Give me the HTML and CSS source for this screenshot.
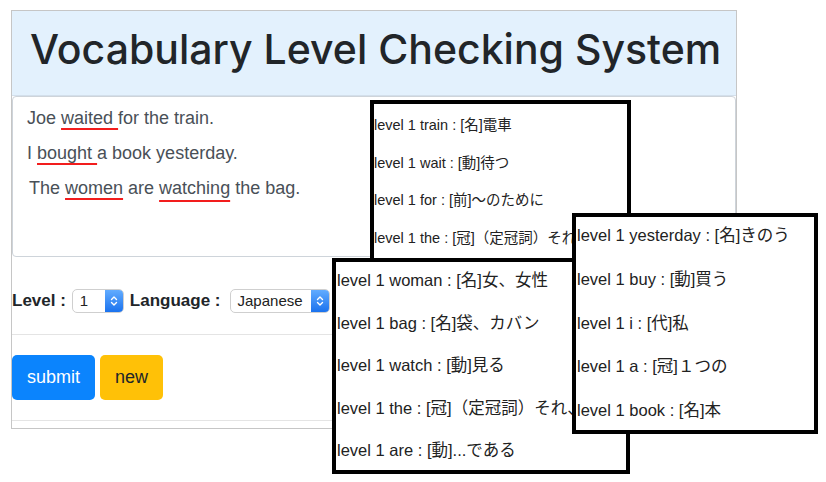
FILE: index.html
```html
<!DOCTYPE html>
<html lang="en">
<head>
<meta charset="utf-8">
<title>Vocabulary Level Checking System</title>
<link rel="stylesheet" href="styles.css">
</head>
<body>
<div class="frame">
  <header class="masthead"><h1>Vocabulary Level Checking System</h1></header>
  <div class="textbox">
    <p>Joe <span class="mark">waited </span>for the train.</p>
    <p>I <span class="mark">bought </span>a book yesterday.</p>
    <p class="l3">The <span class="mark">women</span> are <span class="mark deep">watching</span> the bag.</p>
  </div>
  <div class="options">
    <span class="lbl">Level :</span>
    <div class="sel sel-level"><span class="val">1</span><span class="arrows"><svg width="8" height="14" viewBox="0 0 8 14"><polyline points="1.5,5.5 4,3 6.5,5.5"/><polyline points="1.5,8.5 4,11 6.5,8.5"/></svg></span></div>
    <span class="lbl lbl-lang">Language :</span>
    <div class="sel sel-lang"><span class="val">Japanese</span><span class="arrows"><svg width="8" height="14" viewBox="0 0 8 14"><polyline points="1.5,5.5 4,3 6.5,5.5"/><polyline points="1.5,8.5 4,11 6.5,8.5"/></svg></span></div>
  </div>
  <hr class="rule">
  <div class="actions">
    <button class="btn btn-submit">submit</button>
    <button class="btn btn-new">new</button>
  </div>
  <hr class="rule">
</div>

<div class="popup p1">
  <p>level 1 train : [名]電車</p>
  <p>level 1 wait : [動]待つ</p>
  <p>level 1 for : [前]〜のために</p>
  <p class="cut">level 1 the : [冠]（定冠詞）それ</p>
</div>

<div class="popup p2">
  <p>level 1 woman : [名]女、女性</p>
  <p>level 1 bag : [名]袋、カバン</p>
  <p>level 1 watch : [動]見る</p>
  <p class="cut">level 1 the : [冠]（定冠詞）それ、</p>
  <p>level 1 are : [動]...である</p>
</div>

<div class="popup p3">
  <p>level 1 yesterday : [名]きのう</p>
  <p>level 1 buy : [動]買う</p>
  <p>level 1 i : [代]私</p>
  <p>level 1 a : [冠]１つの</p>
  <p>level 1 book : [名]本</p>
</div>
</body>
</html>
```

FILE: styles.css
```css
body {
  margin: 0;
  width: 826px;
  height: 482px;
  position: relative;
  overflow: hidden;
  background: #fff;
  font-family: "Liberation Sans", "Noto Sans CJK JP", sans-serif;
}

.frame {
  margin: 10px 0 0 11px;
  width: 726px;
  height: 419px;
  box-sizing: border-box;
  border: 1px solid #c6c6c6;
}

.masthead {
  height: 85px;
  box-sizing: border-box;
  padding: 12px 0 0 18px;
  background: #e3f1fd;
  border-bottom: 1px solid #d3dfeb;
}

.masthead h1 {
  margin: 0;
  font-family: Inter, "Liberation Sans", sans-serif;
  font-size: 41px;
  line-height: 52px;
  font-weight: 500;
  color: #212529;
  white-space: nowrap;
}

.textbox {
  height: 161px;
  box-sizing: border-box;
  border: 1px solid #ced4da;
  border-radius: 4px;
  padding: 4px 14px 0;
  color: #495057;
  font-size: 18px;
}

.textbox p {
  margin: 0;
  line-height: 35px;
}

.textbox .l3 {
  padding-left: 2px;
}

.mark {
  text-decoration: underline;
  text-decoration-color: #f21d1d;
  text-decoration-thickness: 2px;
  text-underline-offset: 4px;
  text-decoration-skip-ink: none;
}

.mark.deep {
  text-underline-offset: 6px;
}

.options {
  display: flex;
  align-items: center;
  gap: 6px;
  height: 77px;
  box-sizing: border-box;
  padding: 32px 0 21px;
}

.lbl {
  font-size: 17px;
  font-weight: bold;
  color: #212529;
}

.lbl-lang {
  margin-right: 3px;
}

.sel {
  display: flex;
  height: 24px;
  box-sizing: border-box;
  border: 1px solid #cfcfcf;
  border-radius: 5px;
  background: #fff;
  overflow: hidden;
  font-size: 15px;
  color: #222;
}

.sel .val {
  flex: 1;
  padding-left: 7px;
  line-height: 22px;
}

.sel .arrows {
  width: 18px;
  display: flex;
  align-items: center;
  justify-content: center;
  background: linear-gradient(#62acff, #1a72ee);
}

.sel .arrows svg polyline {
  fill: none;
  stroke: #fff;
  stroke-width: 1.4;
  stroke-linecap: round;
  stroke-linejoin: round;
}

.sel-level {
  width: 52px;
}

.sel-lang {
  width: 100px;
}

.rule {
  margin: 0;
  border: 0;
  border-top: 1px solid #e4e4e4;
}

.actions {
  display: flex;
  gap: 5px;
  padding: 20px 0;
}

.btn {
  height: 45px;
  border: 0;
  border-radius: 5px;
  padding: 0 15px;
  font-family: "Liberation Sans", sans-serif;
  font-size: 18px;
}

.btn-submit {
  background: #0b84fd;
  color: #fff;
}

.btn-new {
  background: #ffc107;
  color: #212529;
}

.popup {
  position: absolute;
  box-sizing: border-box;
  border: 4px solid #000;
  background: #fff;
  color: #222;
  overflow: hidden;
  white-space: nowrap;
}

.popup p {
  margin: 0;
}

.popup p.cut {
  overflow: hidden;
}

.p1 {
  left: 370px;
  top: 100px;
  width: 261px;
  height: 163px;
  padding-top: 3px;
  font-size: 14.5px;
  z-index: 1;
}

.p1 p {
  line-height: 37.5px;
}

.p1 p.cut {
  width: 198px;
}

.p2 {
  left: 332px;
  top: 258px;
  width: 298px;
  height: 216px;
  padding-left: 1px;
  font-size: 16.5px;
  z-index: 2;
}

.p2 p {
  line-height: 36px;
  margin-bottom: 6.5px;
}

.p2 p.cut {
  width: 235px;
}

.p3 {
  left: 572px;
  top: 213px;
  width: 246px;
  height: 221px;
  padding-left: 1px;
  font-size: 16.5px;
  z-index: 3;
}

.p3 p {
  line-height: 36px;
  margin-bottom: 7.75px;
}
```
